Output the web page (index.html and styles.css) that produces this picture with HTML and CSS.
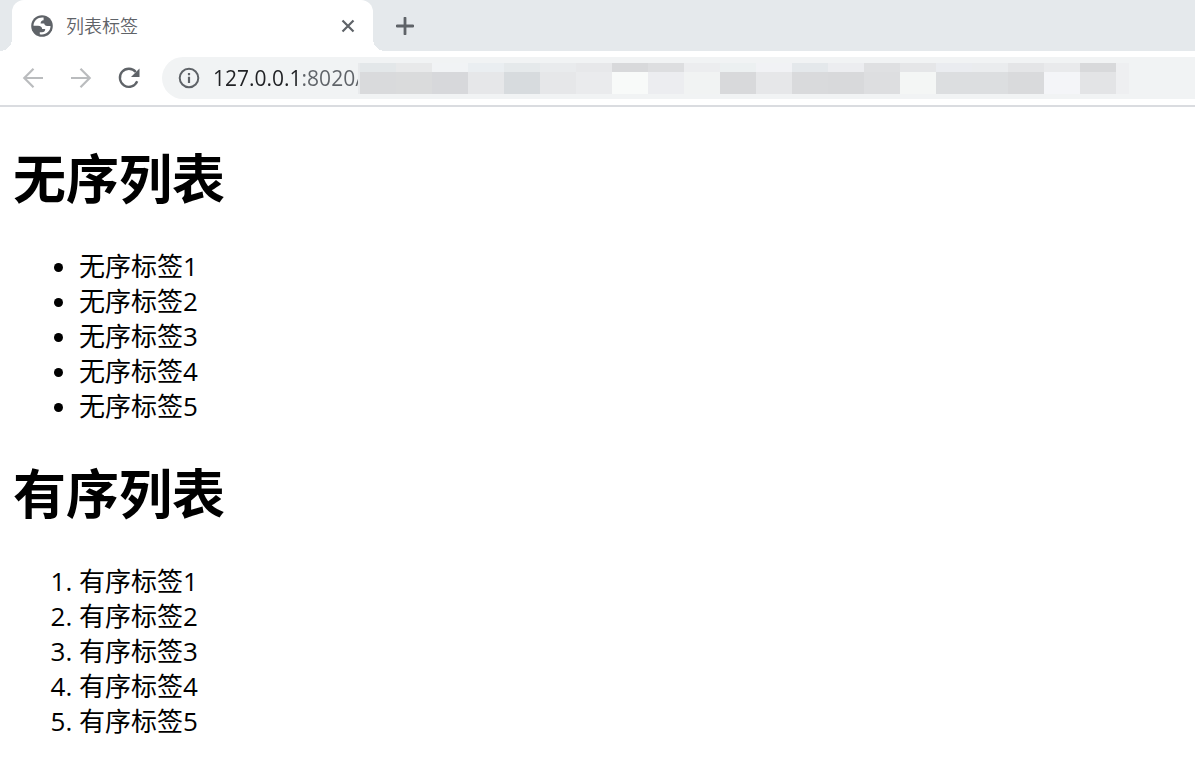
FILE: index.html
```html
<!DOCTYPE html>
<html lang="zh-CN">
<head>
    <meta charset="UTF-8">
    <meta name="viewport" content="width=device-width, initial-scale=1.0">
    <title>列表标签</title>
    <link rel="stylesheet" href="styles.css">
</head>
<body>
    <header class="browser">
        <!-- Tab strip -->
        <div class="tabs">
            <div class="tab">
                <svg class="favicon" width="22" height="22" viewBox="0 0 22 22">
                    <circle cx="11" cy="11" r="10.8" fill="#5f6368"/>
                    <path d="M12.600 2.600C7.500 1.800 2.500 5.500 2.500 10.800H7c2.600 0 4.200 1.300 4.200 3.200h3c0 2.200-1.200 3.300-3.200 3.300H8.800v1.900C14 20.600 19.600 16.800 19.500 11h-3.300c-1.800 0-2.700-.8-3-2.400H9.600C9.600 6.600 10.600 5.400 12.600 5.300z" fill="#fff"/>
                </svg>
                <span class="tab-title">列表标签</span>
                <button class="icon-btn close" aria-label="关闭">
                    <svg width="14" height="14" viewBox="0 0 14 14"><path d="M1.500 1.500l11 11M12.500 1.500l-11 11" stroke="#5f6368" stroke-width="2.200"/></svg>
                </button>
            </div>
            <button class="icon-btn new-tab" aria-label="新标签页">
                <svg width="18" height="18" viewBox="0 0 18 18"><path d="M9 1v16M1 9h16" stroke="#5f6368" stroke-width="2.800" stroke-linecap="round"/></svg>
            </button>
        </div>
        <!-- Toolbar -->
        <div class="toolbar">
            <button class="icon-btn nav" aria-label="后退">
                <svg width="22" height="22" viewBox="0 0 22 22" fill="none" stroke="#babcbe" stroke-width="2.200"><path d="M21 11H2.500M11.500 1.800L2.300 11l9.200 9.200"/></svg>
            </button>
            <button class="icon-btn nav" aria-label="前进">
                <svg width="22" height="22" viewBox="0 0 22 22" fill="none" stroke="#babcbe" stroke-width="2.200"><path d="M1 11h18.500M10.500 1.800l9.200 9.200-9.200 9.200"/></svg>
            </button>
            <button class="icon-btn nav" aria-label="重新加载">
                <svg width="22" height="22" viewBox="0 0 22 22"><path d="M17.800 5A9 9 0 1 0 19.200 14.200" fill="none" stroke="#5f6368" stroke-width="2.300"/><path d="M21.500 1.500v8.500h-8.500z" fill="#5f6368"/></svg>
            </button>
            <div class="omnibox">
                <svg class="info" width="22" height="22" viewBox="0 0 22 22"><circle cx="11" cy="11" r="9.300" fill="none" stroke="#5f6368" stroke-width="2"/><path d="M11 6v2.200M11 9.700v6.300" stroke="#5f6368" stroke-width="2.200"/></svg>
                <input class="address" type="text" value="127.0.0.1:8020/" aria-label="地址" spellcheck="false">
                <svg class="mosaic" width="771" height="31" viewBox="0 0 771 31" shape-rendering="crispEdges">
                    <g>
                        <rect x="0" y="0" width="2" height="31" fill="#e8eaec"/>
                        <rect x="2" width="36" height="9" fill="#e3e7e9"/>
                        <rect x="38" width="36" height="9" fill="#e8e9ea"/>
                        <rect x="74" width="36" height="9" fill="#f1f3f5"/>
                        <rect x="110" width="36" height="9" fill="#eaeef1"/>
                        <rect x="146" width="36" height="9" fill="#e5e9eb"/>
                        <rect x="182" width="36" height="9" fill="#e9ebed"/>
                        <rect x="218" width="36" height="9" fill="#e7e8ea"/>
                        <rect x="254" width="36" height="9" fill="#d8d9db"/>
                        <rect x="290" width="36" height="9" fill="#dddee0"/>
                        <rect x="326" width="36" height="9" fill="#ecedef"/>
                        <rect x="362" width="36" height="9" fill="#ecf0f1"/>
                        <rect x="398" width="36" height="9" fill="#f1f2f5"/>
                        <rect x="434" width="36" height="9" fill="#e4e8eb"/>
                        <rect x="470" width="36" height="9" fill="#ecedf0"/>
                        <rect x="506" width="36" height="9" fill="#dfe0e2"/>
                        <rect x="542" width="36" height="9" fill="#e5e6e8"/>
                        <rect x="578" width="36" height="9" fill="#eaecf0"/>
                        <rect x="614" width="36" height="9" fill="#eaecee"/>
                        <rect x="650" width="36" height="9" fill="#e4e5e7"/>
                        <rect x="686" width="36" height="9" fill="#e9eaec"/>
                        <rect x="722" width="36" height="9" fill="#d8d9db"/>
                    </g>
                    <g>
                        <rect x="2" y="9" width="36" height="22" fill="#d9dadc"/>
                        <rect x="38" y="9" width="36" height="22" fill="#dadbdc"/>
                        <rect x="74" y="9" width="36" height="22" fill="#d7d8db"/>
                        <rect x="110" y="9" width="36" height="22" fill="#e6e7e9"/>
                        <rect x="146" y="9" width="36" height="22" fill="#d7dbde"/>
                        <rect x="182" y="9" width="36" height="22" fill="#e6e7e9"/>
                        <rect x="218" y="9" width="36" height="22" fill="#eaebed"/>
                        <rect x="254" y="9" width="36" height="22" fill="#f8faf9"/>
                        <rect x="290" y="9" width="36" height="22" fill="#ecedf0"/>
                        <rect x="326" y="9" width="36" height="22" fill="#f1f3f3"/>
                        <rect x="362" y="9" width="36" height="22" fill="#d8d9db"/>
                        <rect x="398" y="9" width="36" height="22" fill="#e6e7e9"/>
                        <rect x="434" y="9" width="36" height="22" fill="#d9dadc"/>
                        <rect x="470" y="9" width="36" height="22" fill="#d8d9db"/>
                        <rect x="506" y="9" width="36" height="22" fill="#dddee0"/>
                        <rect x="542" y="9" width="36" height="22" fill="#f4f6f5"/>
                        <rect x="578" y="9" width="72" height="22" fill="#dcdee0"/>
                        <rect x="650" y="9" width="36" height="22" fill="#d9dadc"/>
                        <rect x="686" y="9" width="36" height="22" fill="#f4f5f8"/>
                        <rect x="722" y="9" width="36" height="22" fill="#e3e4e6"/>
                        <rect x="758" y="0" width="13" height="31" fill="#eeeff1"/>
                    </g>
                </svg>
            </div>
        </div>
    </header>

    <main class="page">
        <h1>无序列表</h1>
        <ul>
            <li>无序标签1</li>
            <li>无序标签2</li>
            <li>无序标签3</li>
            <li>无序标签4</li>
            <li>无序标签5</li>
        </ul>
        <h1>有序列表</h1>
        <ol>
            <li>有序标签1</li>
            <li>有序标签2</li>
            <li>有序标签3</li>
            <li>有序标签4</li>
            <li>有序标签5</li>
        </ol>
    </main>
</body>
</html>
```
FILE: styles.css
```css
* {
    box-sizing: border-box;
}
body {
    margin: 0;
    background-color: #fff;
    color: #000;
    font-family: "Open Sans", "Noto Sans CJK SC", sans-serif;
}
.icon-btn {
    display: flex;
    align-items: center;
    justify-content: center;
    flex: none;
    padding: 0;
    border: none;
    background: none;
    cursor: pointer;
}

/* Tab strip */
.tabs {
    display: flex;
    align-items: center;
    height: 51px;
    padding-left: 12px;
    background-color: #e5e9ec;
}
.tab {
    position: relative;
    display: flex;
    align-items: center;
    width: 361px;
    height: 51px;
    padding: 0 12px 0 19px;
    border-radius: 12px 12px 0 0;
    background-color: #fff;
}
.tab::before,
.tab::after {
    content: "";
    position: absolute;
    bottom: 0;
    width: 12px;
    height: 12px;
}
.tab::before {
    right: 100%;
    background: radial-gradient(circle at 0 0, transparent 12px, #fff 12px);
}
.tab::after {
    left: 100%;
    background: radial-gradient(circle at 100% 0, transparent 12px, #fff 12px);
}
.tab-title {
    flex: 1;
    margin-left: 13px;
    color: #5f6368;
    font-size: 18px;
    font-weight: 350;
    line-height: 24px;
}
.close {
    width: 26px;
    height: 26px;
}
.new-tab {
    width: 40px;
    height: 40px;
    margin-left: 12px;
}

/* Toolbar */
.toolbar {
    display: flex;
    align-items: center;
    height: 56px;
    padding-left: 9px;
    border-bottom: 2px solid #dadce0;
}
.nav {
    width: 48px;
    height: 42px;
}
.omnibox {
    display: flex;
    align-items: center;
    flex: 1;
    min-width: 0;
    height: 42px;
    margin-left: 9px;
    padding-left: 16px;
    border-radius: 21px 0 0 21px;
    background-color: #f1f3f4;
    overflow: hidden;
}
.info,
.mosaic {
    flex: none;
}
.address {
    flex: none;
    width: 145px;
    height: 32px;
    margin-left: 13px;
    padding: 0;
    border: none;
    outline: none;
    /* host is darker than the port and path */
    background: linear-gradient(to right, #202124 90px, #5f6368 90px);
    background-clip: text;
    color: transparent;
    font-family: inherit;
    font-size: 21px;
}

/* Page content */
.page {
    padding: 2px 13px 0;
    font-size: 26px;
    line-height: 35px;
}
.page h1 {
    margin: 35px 0;
    font-size: 53px;
    line-height: 70px;
}
.page ul,
.page ol {
    margin: 26px 0;
    padding-left: 66px;
}
```
